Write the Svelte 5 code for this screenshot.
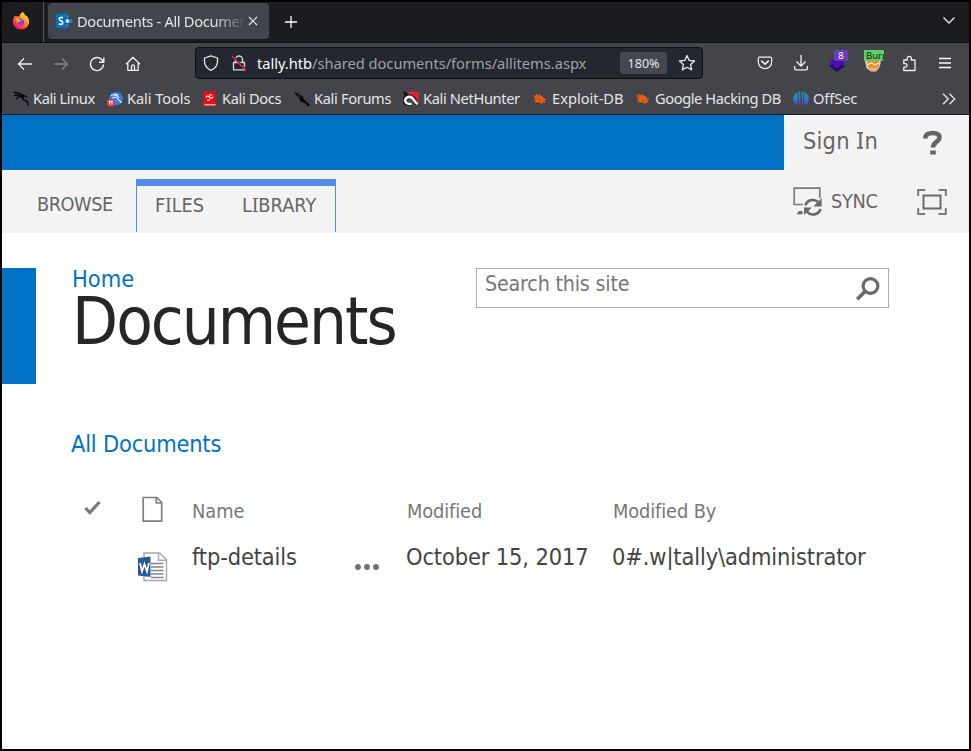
<script>
  const bookmarks = [
    { icon: 'dragon', label: 'Kali Linux', width: 94, spacing: -0.42 },
    { icon: 'tools', label: 'Kali Tools', width: 95, spacing: -0.1 },
    { icon: 'docs', label: 'Kali Docs', width: 92, spacing: -0.35 },
    { icon: 'forums', label: 'Kali Forums', width: 109, spacing: -0.35 },
    { icon: 'hunter', label: 'Kali NetHunter', width: 129, spacing: -0.37 },
    { icon: 'exploit', label: 'Exploit-DB', width: 103, spacing: 0 },
    { icon: 'exploit', label: 'Google Hacking DB', width: 158, spacing: -0.42 },
    { icon: 'offsec', label: 'OffSec', width: 80, spacing: -0.1 }
  ];
</script>

{#snippet bookmarkIcon(kind)}
  <svg class="bm-icon" width="16" height="16" viewBox="0 0 16 16">
    {#if kind === 'dragon'}
      <path d="M1 1c3 1.500 6 1 8.500 2.800M.8 4.600c3-.8 5-.4 7.500.3M3 8c2-2 4-2.800 6-2.600 0 3 1.500 3.600 3.500 4.100 2 .6 2.500 2 2.600 5" fill="none" stroke="#08090a" stroke-width="1.500"/>
      <path d="M8 3.200 12 4l3 2.500-3.500-.7-1 2L8 6z" fill="#08090a"/>
    {:else if kind === 'tools'}
      <circle cx="9" cy="7.500" r="6.800" fill="#367bf0"/>
      <path d="M4 4.500c3-1.500 6-.5 8 2M5 7c2-1 5-1 5.500.5S13 9 14.500 12M7 3l4 1" fill="none" stroke="#e8f1ff" stroke-width="1.100"/>
      <rect x="0" y="8" width="7.500" height="7.500" rx="2.500" fill="#e43a3f"/>
      <path d="M1.500 10.300h4.500M2.700 10.300v3.300M4.900 10.300v3.300" stroke="#fff" stroke-width="1" fill="none"/>
    {:else if kind === 'docs'}
      <path d="M1.500.5h12v15h-12z" fill="#e80d12"/>
      <path d="M2.500 13.200h11v1.200h-11z" fill="#d8d4d0"/>
      <path d="M4 6.300c1.200-1.800 2.600-1.200 3.500 0s2.400 1.400 3.600-.6M5.200 8.800c.8.900 1.600.4 2.600 0M7 4.200c1-.6 2-.6 3 0" fill="none" stroke="#fff" stroke-width="1.200"/>
    {:else if kind === 'forums'}
      <path d="M0 1.500 3.500 2l3 2.500 2.500.5.500 3 3 2.500 3.500 3.500-1.500 1.500-4-3.500-4-1.500L5 7z" fill="#060708"/>
      <path d="m1 1 5 6M4 2l2 5" stroke="#1c1d20" stroke-width="1"/>
    {:else if kind === 'hunter'}
      <path d="M3 .8h13v12.700L9 6z" fill="#e0222c"/>
      <path d="M0 .3 5 2 2 6z" fill="#141416"/>
      <path d="M8 13C3 13.500 1 11.500 1.700 8.500 2.500 5.500 7 4.500 9.500 6.500c2.500 2 2 4 5 6.500" fill="none" stroke="#191a1d" stroke-width="4.200"/>
      <path d="M8.500 12.800C4 13.500 1.800 11.500 2.200 8.800 3 5.800 7 5 9.200 7c2.300 2 2.300 3.800 5.300 6" fill="none" stroke="#fff" stroke-width="2.500"/>
    {:else if kind === 'exploit'}
      <path d="m.8 4.200 3 .4L4 2.500l2 1.800 2-1 1 1.800 2 .2.700 2.200L15 8.500l-2.500 1 .8 2.800-2.500-1-.5 2.500-1.800-2-3.800-.5-3 .5 2-1.500-2-2 2-.5z" fill="#e65d13"/>
      <path d="m2 6 9 5" stroke="#b94d14" stroke-width=".7"/>
    {:else}
      <defs>
        <linearGradient id="offsec" x1="0" y1="0" x2="0" y2="1">
          <stop offset="0" stop-color="#10a9b8"/>
          <stop offset="1" stop-color="#583fd0"/>
        </linearGradient>
      </defs>
      <path d="M7.200.8v14.700C5 13 6.300 4 5.600 1zM8.800.8v14.700C11 13 9.700 4 10.400 1zM4.700 1.200v12.900C-1.300 11.500-1.300 4 4.700 1.200zM11.300 1.200v12.900c6-2.600 6-10.100 0-12.900z" fill="url(#offsec)"/>
    {/if}
  </svg>
{/snippet}

<div class="window">
  <header class="chrome">
    <div class="tabbar">
      <div class="pinned">
        <svg width="18" height="18" viewBox="0 0 18 18">
          <defs>
            <linearGradient id="fox" x1="1" y1="0" x2=".25" y2="1">
              <stop offset="0" stop-color="#fff33f"/>
              <stop offset=".35" stop-color="#ffb320"/>
              <stop offset=".65" stop-color="#ff5a35"/>
              <stop offset="1" stop-color="#ed0f65"/>
            </linearGradient>
          </defs>
          <path d="M10.300 0c2.200 1 2.700 2.700 2.800 3.700l.7-.5C16 4.600 17.100 7 17.100 9.500c0 4.600-3.600 8-8.100 8s-8.200-3.500-8.200-8c0-2.400.8-4 1.600-4.900l.5-1.200 1 1.100C5.200 4 6.500 4.200 7.200 5c.3-2 1.700-3.700 3.100-5z" fill="url(#fox)"/>
          <path d="M5.400 8.500c.6-1.700 2-2.600 3.600-2.400-.4.700 0 1.100.8 1.500 1.400.2 2.500 1.100 2.500 2.500 0 1.900-1.500 3.200-3.400 3.100-2.100-.1-3.600-1.700-3.500-4.700z" fill="#7743e8"/>
          <path d="M4 6.500c1.500-.3 3 0 4 1.300l2 .3c-.2 1-2.200.8-2.600 1.700-.5.900-1.900.7-2.700-.1z" fill="#ff9a2c"/>
        </svg>
      </div>
      <div class="tab">
        <svg class="sp" width="17" height="16" viewBox="0 0 17 16">
          <path d="M9.500 3 15 8l-5.500 5" fill="none" stroke="#0072c6" stroke-width="1.600"/>
          <circle cx="10.800" cy="3.200" r="1.800" fill="#1686d9"/><circle cx="14.600" cy="8" r="1.900" fill="#1686d9"/><circle cx="10.800" cy="12.800" r="1.800" fill="#1686d9"/>
          <circle cx="11.300" cy="8" r="2" fill="#d7ebf9"/>
          <path d="M0 1.500 9.500 0v16L0 14.500z" fill="#0072c6"/>
          <path d="M7 4.800C5.800 4.200 3.200 4 3.200 6c0 2 3.600 1.500 3.600 3.700 0 2-2.600 2-4.200 1.200" fill="none" stroke="#fff" stroke-width="1.600"/>
        </svg>
        <span class="tab-title">Documents - All Documents</span>
        <svg class="close" width="10" height="10" viewBox="0 0 10 10"><path d="m1 1 8 8M9 1 1 9" stroke="#e6e6e8" stroke-width="1.100"/></svg>
      </div>
      <svg class="plus" width="12" height="12" viewBox="0 0 12 12"><path d="M6 0v12M0 6h12" stroke="#fbfbfe" stroke-width="1.300"/></svg>
      <svg class="chev" width="14" height="9" viewBox="0 0 14 9"><path d="m1.500 1.500 5.500 5.500 5.500-5.500" fill="none" stroke="#e6e6e8" stroke-width="1.400"/></svg>
    </div>

    <div class="navbar">
      <div class="navbtns">
        <svg width="16" height="16" viewBox="0 0 16 16"><path d="M15 8H1.500M7 2.500 1.500 8 7 13.500" fill="none" stroke="#f0f0f2" stroke-width="1.300"/></svg>
        <svg width="16" height="16" viewBox="0 0 16 16"><path d="M1 8h13.500M9 2.500 14.500 8 9 13.500" fill="none" stroke="#84858a" stroke-width="1.300"/></svg>
        <svg width="16" height="16" viewBox="0 0 16 16"><path d="M14 5.500A6.500 6.500 0 1 0 14.500 8.500M14.800 1.500v4.800H10" fill="none" stroke="#f0f0f2" stroke-width="1.400"/></svg>
        <svg width="16" height="16" viewBox="0 0 16 16"><path d="M1 8.300 8 1.200l7 7.100M2.800 7v7.300h10.400V7M6.500 14v-3.600a1.500 1.500 0 0 1 3 0V14" fill="none" stroke="#f0f0f2" stroke-width="1.300" stroke-linejoin="round"/></svg>
      </div>
      <div class="urlbar">
        <svg class="shield" width="16" height="16" viewBox="0 0 16 16"><path d="M8 .8 14.500 3v3.500c0 4-2.500 7-6.500 8.800C4 13.500 1.500 10.500 1.500 6.500V3z" fill="none" stroke="#e8e8eb" stroke-width="1.300" stroke-linejoin="round"/></svg>
        <svg class="lock" width="16" height="17" viewBox="0 0 16 17"><path d="M4.500 7V4.500a3.500 3.500 0 0 1 7 0V7M2.500 7.500h11v7.300h-11z" fill="none" stroke="#d8d8dc" stroke-width="1.300" stroke-linejoin="round"/><path d="m2.500 1.500 12.500 13" stroke="#242730" stroke-width="1.600"/><path d="m1 1 14 14.500" stroke="#e22850" stroke-width="1.300"/></svg>
        <span class="url"><b>tally.htb</b>/shared documents/forms/allitems.aspx</span>
        <span class="zoom">180%</span>
        <svg class="star" width="18" height="18" viewBox="0 0 18 18"><path d="m9 1.500 2.200 4.900 5.300.6-3.900 3.600 1.100 5.300L9 13.300l-4.700 2.600 1.100-5.300L1.500 7l5.300-.6z" fill="none" stroke="#e8e8eb" stroke-width="1.300" stroke-linejoin="round"/></svg>
      </div>
      <div class="toolicons">
        <svg width="16" height="16" viewBox="0 0 16 16"><path d="M2.500 2.200h11a1.200 1.200 0 0 1 1.200 1.200v3.400c0 4-3 6.800-6.700 6.800S1.300 10.800 1.300 6.800V3.400a1.200 1.200 0 0 1 1.200-1.200z" fill="none" stroke="#f0f0f2" stroke-width="1.200"/><path d="m4.700 6.200 3.300 3 3.300-3" fill="none" stroke="#f0f0f2" stroke-width="1.600" stroke-linecap="round"/></svg>
        <svg width="16" height="16" viewBox="0 0 16 16"><path d="M8 0v10.500M3.500 6.500 8 11l4.500-4.500M1.600 11v2.400a1.400 1.400 0 0 0 1.400 1.400h10a1.400 1.400 0 0 0 1.400-1.400V11" fill="none" stroke="#f0f0f2" stroke-width="1.300"/></svg>
        <div class="ext">
          <svg width="18" height="18" viewBox="0 0 18 18"><path d="m1 11 8-4 8 4-8 6z" fill="#220b6e"/><path d="M1 7.500 9 2l8 5.500-8 5.700z" fill="#4b0cb3"/></svg>
          <span class="badge violet">8</span>
        </div>
        <div class="ext">
          <svg width="18" height="18" viewBox="0 0 18 18"><path d="M.8 5h15.700v4L15 13l-3 3.500H7L2.500 13z" fill="#ddd6cc"/><path d="M3 6h12v5l-3 4.200H6.500L3.500 11z" fill="#f08a24"/><path d="m3.500 10 3.500-2.300 4 2.300 3.500-2" fill="none" stroke="#fff2e0" stroke-width="1.200"/><path d="m6 13 3 1 3-1" fill="none" stroke="#ffd08a" stroke-width="1.200"/></svg>
          <span class="badge green">Burp</span>
        </div>
        <svg width="16" height="17" viewBox="0 0 16 17"><path d="M2 5h3.500V3.300a2 2 0 0 1 4 0V5h3.700V15.500H2v-3.300h1.500a1.700 1.700 0 0 0 0-3.500H2z" transform="translate(.8 0)" fill="none" stroke="#f0f0f2" stroke-width="1.300" stroke-linejoin="round"/></svg>
        <svg width="14" height="12" viewBox="0 0 14 12"><path d="M1 1.500h12M1 6h12M1 10.500h12" stroke="#fbfbfe" stroke-width="1.300"/></svg>
      </div>
    </div>

    <nav class="bookmarks">
      {#each bookmarks as b}
        <div class="bm" style:width="{b.width}px" style:letter-spacing="{b.spacing}px">
          {@render bookmarkIcon(b.icon)}
          <span>{b.label}</span>
        </div>
      {/each}
      <svg class="more" width="14" height="12" viewBox="0 0 14 12"><path d="m1 .8 5.200 5.200L1 11.200M7.500.8 12.700 6l-5.200 5.200" fill="none" stroke="#e8e8ea" stroke-width="1.300"/></svg>
    </nav>
  </header>

  <main>
    <div class="suite">
      <div class="suite-blue"></div>
      <span class="signin">Sign <span class="slab">I</span>n</span>
      <svg class="help" width="20" height="28" viewBox="0 0 20 28"><path d="M2.300 9.500C2.300 5.500 5.400 4 9.800 4c4.500 0 6.600 1.600 6.600 4.500 0 4.500-6.400 4.500-6.400 10" fill="none" stroke="#666" stroke-width="4.600"/><path d="M7.200 21.500h5.600v4H7.200z" fill="#666"/></svg>
    </div>

    <div class="ribbon">
      <span class="browse">BROWSE</span>
      <div class="tabgroup">
        <span class="files">F<span class="slab">I</span>LES</span>
        <span class="library">L<span class="slab">I</span>BRARY</span>
      </div>
      <svg class="syncicon" width="30" height="30" viewBox="0 0 30 30">
        <path d="M10 17.500H1.200V1.200h25.600V11" fill="none" stroke="#7c7c7c" stroke-width="1.700"/>
        <path d="m6 24-2.500 3.200h6V24z" fill="#6a6a6a"/>
        <path d="M12.500 18.500c1.500-6 9.500-7.500 13.500-2.500M27.500 22c-2 6-9.500 7.500-13.500 2.500" fill="none" stroke="#6a6a6a" stroke-width="2.600"/>
        <path d="M28.700 11v8.500h-8.500zM11 28v-7.500h8z" fill="#6a6a6a"/>
      </svg>
      <span class="sync">SYNC</span>
      <svg class="focus" width="30" height="28" viewBox="0 0 30 28"><path d="M1.200 8V2h7M21.500 2h7.300v6M28.800 20v6h-7.300M8.200 26h-7v-6" fill="none" stroke="#7c7c7c" stroke-width="2"/><path d="M6.500 7.500h17v13h-17z" fill="none" stroke="#6a6a6a" stroke-width="2"/></svg>
    </div>

    <div class="titlerow">
      <div class="bluebox"></div>
      <div class="titles">
        <a class="home" href="#home">Home</a>
        <h1>Documents</h1>
      </div>
      <div class="search">
        <span>Search this site</span>
        <svg width="26" height="26" viewBox="0 0 26 26"><circle cx="15.500" cy="10" r="7.400" fill="none" stroke="#6a6a6a" stroke-width="3.200"/><path d="m10.200 15.300-8 8" stroke="#6a6a6a" stroke-width="3.700"/></svg>
      </div>
    </div>

    <div class="view">All Documents</div>

    <div class="row head">
      <div class="c-check"><svg width="17" height="16" viewBox="0 0 17 16"><path d="m1.500 8 4.300 4.700L15.500 2" fill="none" stroke="#7a7a7a" stroke-width="3.200"/></svg></div>
      <div class="c-icon"><svg width="22" height="27" viewBox="0 0 22 27"><path d="M1.200 1.500H15l4.700 5v18.700H1.200z" fill="none" stroke="#808080" stroke-width="1.700"/><path d="M14.300 1.500V7h5.400" fill="none" stroke="#808080" stroke-width="1.700"/></svg></div>
      <div class="c-name">Name</div>
      <div class="c-dots"></div>
      <div class="c-mod">Modified</div>
      <div class="c-by">Modified By</div>
    </div>
    <div class="row item">
      <div class="c-check"></div>
      <div class="c-icon"><svg width="30" height="30" viewBox="0 0 30 30"><path d="M6 1h15.500L28.500 7.500v21H6z" fill="#fff" stroke="#a6a6a6" stroke-width="1.400"/><path d="M20.500 1v7.300h8" fill="none" stroke="#a6a6a6" stroke-width="1.400"/><path d="M13 11.500h12.500M13 15h12.500M13 18.500h12.500M13 22h12.500M13 25.500h12.500" stroke="#858585" stroke-width="1.300"/><path d="m0 6 12.500-1.500V25L0 23.500z" fill="#2b579a"/><path d="m2 11 2 8.500L6.500 12 9 19.500 11 11" fill="none" stroke="#fff" stroke-width="1.800"/></svg></div>
      <div class="c-name">ftp-details</div>
      <div class="c-dots"><svg width="26" height="8" viewBox="0 0 26 8"><circle cx="4" cy="4" r="2.900" fill="#6f6f6f"/><circle cx="13" cy="4" r="2.900" fill="#6f6f6f"/><circle cx="22" cy="4" r="2.900" fill="#6f6f6f"/></svg></div>
      <div class="c-mod">October 15, 2017</div>
      <div class="c-by">0#.w|tally\administrator</div>
    </div>
  </main>
</div>

<style>
  .window {
    box-sizing: border-box;
    width: 971px;
    height: 751px;
    border: 2px solid #000;
    background: #fff;
    overflow: hidden;
    white-space: nowrap;
  }
  svg { display: block; flex: none; }
  .chrome { font: 14.67px/20px "Noto Sans", sans-serif; color: #e6e6e8; }

  .tabbar {
    box-sizing: border-box;
    display: flex;
    align-items: flex-start;
    height: 41px;
    background: #1b1b20;
    border-bottom: 1px solid #101013;
  }
  .pinned { box-sizing: border-box; width: 42px; height: 40px; padding: 10px 0 0 10px; border-right: 1px solid #55555a; }
  .tab {
    box-sizing: border-box;
    display: flex;
    width: 221px;
    height: 36px;
    margin: 1px 0 0 4px;
    padding: 8px 0 0 8px;
    border-radius: 4px;
    background: #43454c;
  }
  .sp { margin-top: 2px; }
  .tab-title {
    width: 167px;
    margin-left: 4px;
    overflow: hidden;
    letter-spacing: -0.33px;
    -webkit-mask-image: linear-gradient(90deg, #000 135px, transparent 170px);
    mask-image: linear-gradient(90deg, #000 135px, transparent 170px);
  }
  .close { margin: 5px 0 0 4px; }
  .plus { margin: 14px 0 0 16px; }
  .chev { margin: 14px 13px 0 auto; }

  .navbar { display: flex; height: 44px; background: #43454b; }
  .navbtns { display: flex; gap: 20px; width: 178px; padding: 13px 0 0 15px; }
  .urlbar {
    box-sizing: border-box;
    display: flex;
    width: 508px;
    height: 32px;
    margin-top: 4px;
    border: 1px solid #0e0f12;
    border-radius: 4px;
    background: #242730;
    flex: none;
  }
  .shield { margin: 7px 0 0 7px; }
  .lock { margin: 7px 0 0 12px; }
  .url { width: 363px; margin: 5px 0 0 10px; color: #a0a1a6; letter-spacing: -0.02px; }
  .url b { font-weight: 400; color: #fbfbfe; }
  .zoom {
    width: 47px;
    height: 22px;
    margin-top: 4px;
    border-radius: 3px;
    background: #44474f;
    font-size: 12.500px;
    line-height: 23px;
    text-align: center;
  }
  .star { margin: 6px 0 0 11px; }
  .toolicons { display: flex; align-items: flex-start; padding: 12px 0 0 54px; gap: 20px; }
  .toolicons > :nth-child(3) { margin-left: -1px; }
  .toolicons > :nth-child(5) { margin: 0 0 0 1px; }
  .toolicons > :nth-child(6) { margin: 2px 0 0 1px; }
  .ext { position: relative; width: 16px; height: 18px; }
  .badge {
    position: absolute;
    top: -5px;
    box-sizing: border-box;
    height: 11px;
    font-size: 9.500px;
    line-height: 11px;
    border-radius: 1px;
    overflow: hidden;
  }
  .violet { left: 6px; width: 14px; background: #6c3cba; color: #fff; text-align: center; }
  .green { left: 0; width: 20px; padding-left: 2px; background: #62cf66; color: #122012; }

  .bookmarks { box-sizing: border-box; display: flex; height: 28px; padding-left: 11px; background: #43454b; border-bottom: 1px solid #1a1b1f; }
  .bm { display: flex; flex: none; }
  .bm span { margin: 1px 0 0 4px; }
  .bm-icon { margin-top: 4px; }
  .more { margin: 6px 13px 0 auto; }

  main { font: 23.4px/28px "DejaVu Sans Condensed", "DejaVu Sans", sans-serif; font-stretch: condensed; color: #444; }
  .slab {
    padding: 0 0.03em;
    background:
      linear-gradient(currentColor, currentColor) 50% 0.2em / 0.26em 0.07em no-repeat,
      linear-gradient(currentColor, currentColor) 50% 0.87em / 0.26em 0.07em no-repeat;
  }
  .suite { display: flex; height: 55px; background: #f3f3f3; color: #666; }
  .suite-blue { width: 782px; background: #0072c6; }
  .signin { width: 80px; margin: 12px 0 0 19px; letter-spacing: 0.2px; }
  .help { margin: 14px 0 0 40px; }

  .ribbon { display: flex; height: 63px; background: #f3f3f3; color: #666; font-size: 19.800px; line-height: 24px; }
  .browse { width: 99px; margin: 23px 0 0 35px; letter-spacing: -0.5px; }
  .tabgroup {
    box-sizing: border-box;
    display: flex;
    width: 200px;
    height: 53px;
    margin-top: 9px;
    padding: 8px 0 0 18px;
    border: solid #4f8ce6;
    border-width: 7px 1px 0;
  }
  .files { width: 87px; }
  .library { width: 80px; }
  .syncicon { margin: 17px 0 0 457px; }
  .sync { width: 60px; margin: 20px 0 0 8px; letter-spacing: -0.3px; }
  .focus { margin: 18px 0 0 26px; }

  .titlerow { display: flex; height: 151px; }
  .bluebox { width: 34px; height: 116px; margin-top: 35px; background: #0072c6; }
  .titles { width: 440px; padding: 32px 0 0 36px; box-sizing: border-box; }
  .home { display: block; color: #0072c6; text-decoration: none; }
  h1 { margin: 0; font-size: 66.600px; line-height: 56px; letter-spacing: -2px; font-weight: 400; color: #262626; }
  .search {
    box-sizing: border-box;
    display: flex;
    justify-content: space-between;
    width: 413px;
    height: 40px;
    margin-top: 35px;
    padding: 0 7px 0 8px;
    border: 1px solid #ababab;
    color: #777;
    font-size: 21.300px;
    letter-spacing: -0.2px;
  }
  .search span { margin-top: 1px; }
  .search svg { margin-top: 7px; }
  .view { margin: 46px 0 0 69px; color: #0072c6; letter-spacing: -0.2px; }

  .row { display: flex; align-items: flex-start; padding-left: 82px; }
  .row.head { height: 46px; margin-top: 37px; font-size: 19.800px; line-height: 24px; color: #777; }
  .row.item { height: 40px; letter-spacing: -0.13px; }
  .c-check { width: 54px; }
  .c-icon { width: 54px; }
  .c-name { width: 163px; }
  .c-dots { width: 51px; }
  .c-mod { width: 206px; }
  .c-by { width: 300px; }
  .head .c-check { padding-top: 5px; }
  .head .c-icon { width: 50px; padding: 1px 0 0 4px; }
  .head .c-name, .head .c-mod, .head .c-by { padding-top: 5px; }
  .head .c-mod, .head .c-by { position: relative; left: 1px; letter-spacing: -0.1px; }
  .item .c-name, .item .c-mod, .item .c-by { padding-top: 2px; }
  .item .c-icon svg { margin-top: 11px; }
  .item .c-dots { width: 52px; margin-left: -1px; }
  .item .c-dots svg { margin-top: 22px; }
</style>
